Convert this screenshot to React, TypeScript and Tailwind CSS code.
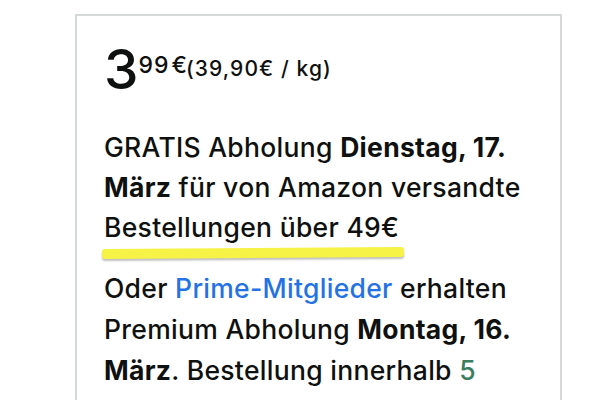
import React from "react";

export default function App() {
  return (
    <div className="w-[598px] h-[400px] overflow-hidden bg-white" style={{ fontFamily: 'Inter, sans-serif' }}>
      <div className="ml-[75px] mt-[14px] w-[487px] h-[420px] border-2 border-[#d5d9d9] pl-[27px] pt-[25px] text-[#0f1111]">
        <div className="flex items-start">
          <span className="text-[55px] leading-[56px] font-medium">3</span>
          <span className="text-[23px] leading-[23px] mt-[13px] ml-[0px] tracking-[1px] font-[450]">99</span>
          <span className="text-[23px] leading-[23px] mt-[13px] ml-[2px] font-[450]">€</span>
          <span className="text-[21px] leading-[21px] mt-[17px] ml-[-1px] tracking-[1.1px] font-[450]">(39,90€ / kg)</span>
        </div>
        <p className="mt-[30px] text-[26.5px] leading-[40px] tracking-[0.3px] font-[450] w-[455px]">
          GRATIS Abholung <b className="font-bold">Dienstag, 17.</b>
          <br />
          <b className="font-bold">März</b> für von Amazon versandte
          <br />
          <span className="relative">
            Bestellungen über 49€
            <span className="absolute left-[-2px] right-[-5px] top-[37px] h-[10px] bg-[#f7f246] rounded-[3px] shadow-[0_2px_2px_rgba(0,0,0,0.25)] -rotate-[0.4deg]" />
          </span>
        </p>
        <p className="mt-[21px] text-[26.5px] leading-[41px] tracking-[0.3px] font-[450] w-[455px]">
          Oder <span className="text-[#2472e4]">Prime-Mitglieder</span> erhalten
          <br />
          Premium Abholung <b className="font-bold">Montag, 16.</b>
          <br />
          <b className="font-bold">März</b>. Bestellung innerhalb <span className="text-[#3b7d5f]">5</span>
          <br />
          <span className="text-[#3b7d5f]">Std. 12 Min.</span> und wähle <span className="text-[#2472e4]">Details</span>
        </p>
      </div>
    </div>
  );
}
